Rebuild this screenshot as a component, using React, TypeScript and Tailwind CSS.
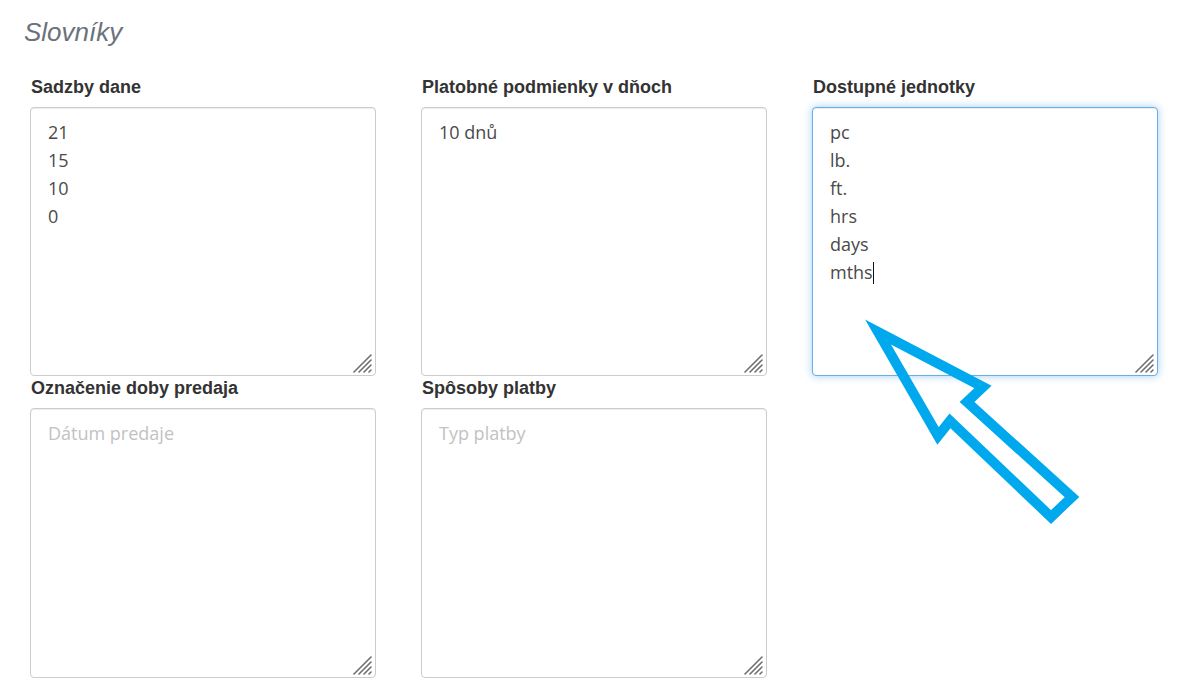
import React from "react";

type Field = {
  label: string;
  lines?: string[];
  placeholder?: string;
  focused?: boolean;
};

const fields: Field[] = [
  { label: "Sadzby dane", lines: ["21", "15", "10", "0"] },
  { label: "Platobné podmienky v dňoch", lines: ["10 dnů"] },
  { label: "Dostupné jednotky", lines: ["pc", "lb.", "ft.", "hrs", "days", "mths"], focused: true },
  { label: "Označenie doby predaja", placeholder: "Dátum predaje" },
  { label: "Spôsoby platby", placeholder: "Typ platby" },
];

function Grip() {
  return (
    <svg className="absolute right-[3px] bottom-[2px]" width="20" height="20" viewBox="0 0 20 20">
      <g stroke="#6e6e6e" strokeWidth="1.6" strokeLinecap="round">
        <path d="M2 19 L19 2" />
        <path d="M7 19 L19 7" />
        <path d="M12 19 L19 12" />
        <path d="M17 19 L19 17" />
      </g>
    </svg>
  );
}

function Box({ field, tall }: { field: Field; tall?: boolean }) {
  const lines = field.lines ?? [];
  return (
    <div>
      <div className="mb-[10px] pl-[1px] font-['Liberation_Sans',Arial,sans-serif] text-[18px] font-bold leading-[20px] text-[#333]">
        {field.label}
      </div>
      <div
        className={`relative rounded-[4px] border bg-white px-[17px] pt-[10px] font-['Open_Sans','Noto_Sans',sans-serif] text-[18px] leading-[28px] ${
          tall ? "h-[270px]" : "h-[269px]"
        } ${
          field.focused
            ? "border-[#66afe9] shadow-[inset_0_1px_1px_rgba(0,0,0,0.075),0_0_8px_rgba(102,175,233,0.6)]"
            : "border-[#cccccc] shadow-[inset_0_1px_1px_rgba(0,0,0,0.075)]"
        }`}
      >
        {lines.length > 0 ? (
          lines.map((l, i) => (
            <div key={i} className="text-[#4a4a4a]">
              {l}
              {field.focused && i === lines.length - 1 && (
                <span className="inline-block h-[22px] w-0 border-l border-[#111] align-[-5px]" />
              )}
            </div>
          ))
        ) : (
          <div className="text-[#c2c2c2]">{field.placeholder}</div>
        )}
        <Grip />
      </div>
    </div>
  );
}

export default function App() {
  return (
    <div className="relative h-[693px] w-[1189px] overflow-hidden bg-white">
      <h1 className="pl-6 pt-[16px] font-['Liberation_Sans',Arial,sans-serif] text-[26px] italic leading-[32px] text-[#6b717b]">
        Slovníky
      </h1>

      <div className="mt-[29px] grid grid-cols-[346px_346px_346px] gap-x-[45px] gap-y-[2px] pl-[30px]">
        {fields.map((f, i) => (
          <Box key={f.label} field={f} tall={i >= 3} />
        ))}
      </div>

      {/* callout arrow */}
      <svg className="pointer-events-none absolute left-0 top-0" width="1189" height="693" viewBox="0 0 1189 693">
        <polygon
          points="878,332 983,387 967,402 1072,497 1051,517 950,421 938,436"
          fill="none"
          stroke="#00a9ee"
          strokeWidth="10"
          strokeLinejoin="miter"
        />
      </svg>
    </div>
  );
}
